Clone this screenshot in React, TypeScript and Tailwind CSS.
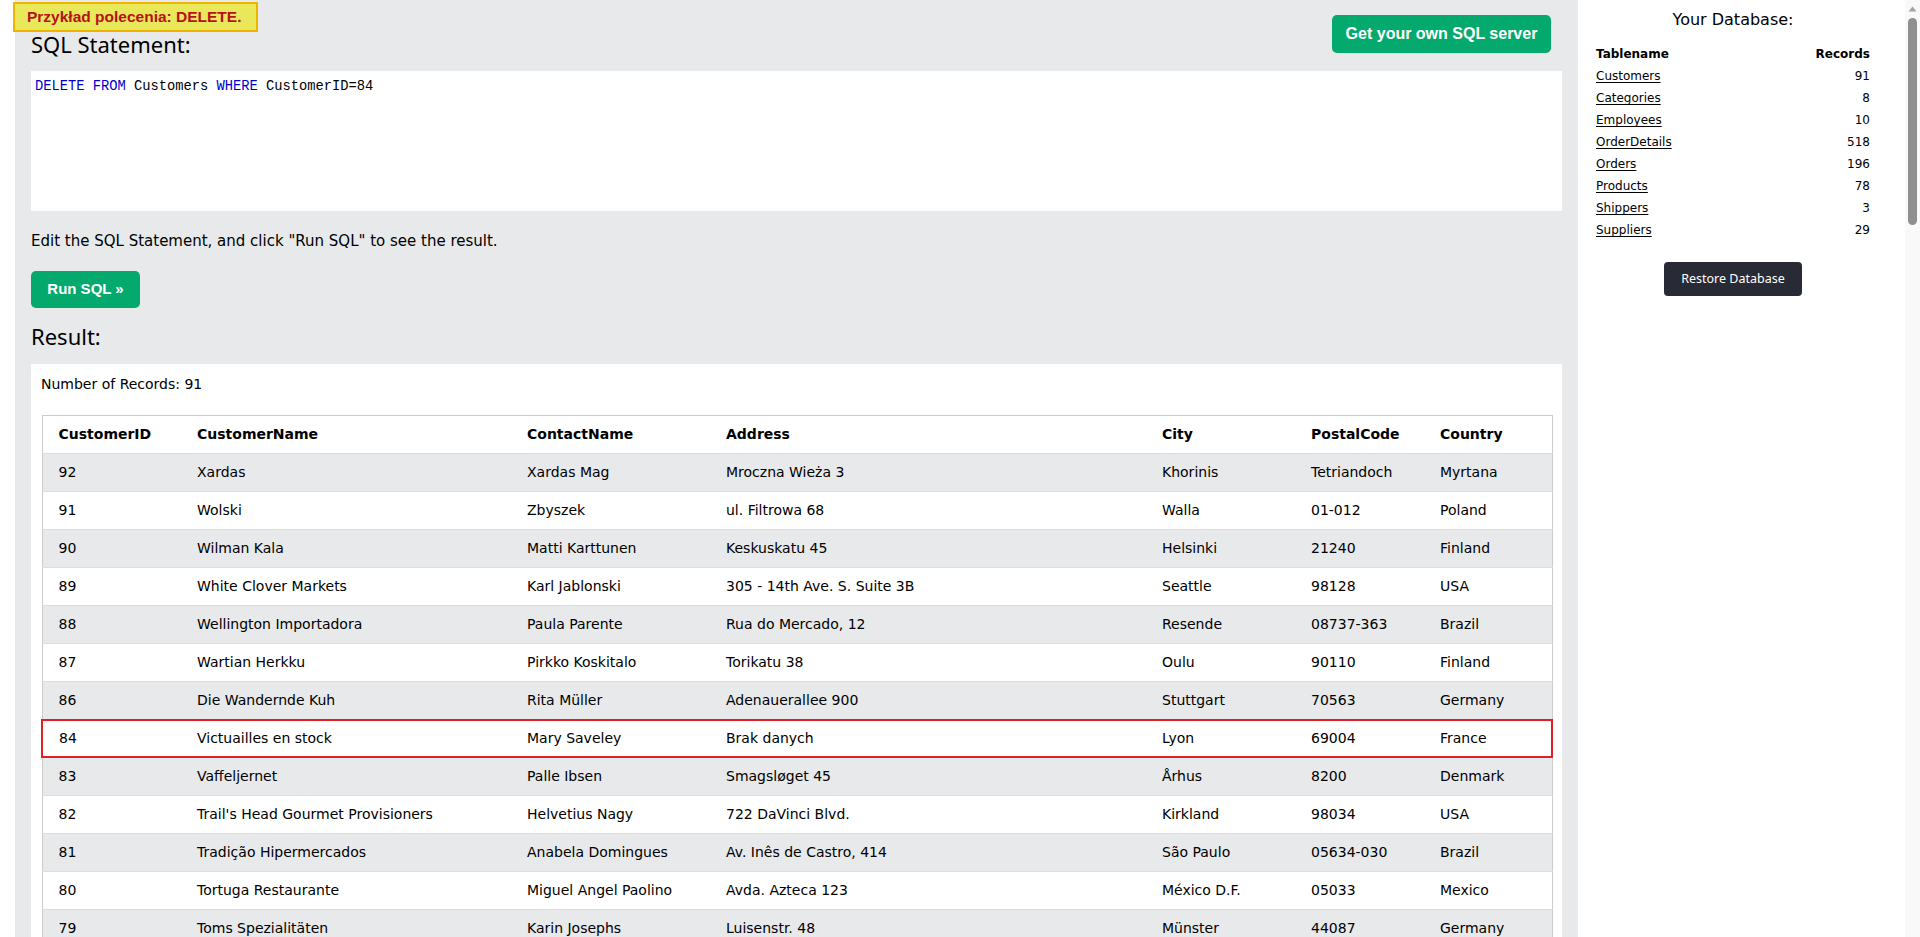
const rows: string[][] = [
  ["92", "Xardas", "Xardas Mag", "Mroczna Wieża 3", "Khorinis", "Tetriandoch", "Myrtana"],
  ["91", "Wolski", "Zbyszek", "ul. Filtrowa 68", "Walla", "01-012", "Poland"],
  ["90", "Wilman Kala", "Matti Karttunen", "Keskuskatu 45", "Helsinki", "21240", "Finland"],
  ["89", "White Clover Markets", "Karl Jablonski", "305 - 14th Ave. S. Suite 3B", "Seattle", "98128", "USA"],
  ["88", "Wellington Importadora", "Paula Parente", "Rua do Mercado, 12", "Resende", "08737-363", "Brazil"],
  ["87", "Wartian Herkku", "Pirkko Koskitalo", "Torikatu 38", "Oulu", "90110", "Finland"],
  ["86", "Die Wandernde Kuh", "Rita Müller", "Adenauerallee 900", "Stuttgart", "70563", "Germany"],
  ["84", "Victuailles en stock", "Mary Saveley", "Brak danych", "Lyon", "69004", "France"],
  ["83", "Vaffeljernet", "Palle Ibsen", "Smagsløget 45", "Århus", "8200", "Denmark"],
  ["82", "Trail's Head Gourmet Provisioners", "Helvetius Nagy", "722 DaVinci Blvd.", "Kirkland", "98034", "USA"],
  ["81", "Tradição Hipermercados", "Anabela Domingues", "Av. Inês de Castro, 414", "São Paulo", "05634-030", "Brazil"],
  ["80", "Tortuga Restaurante", "Miguel Angel Paolino", "Avda. Azteca 123", "México D.F.", "05033", "Mexico"],
  ["79", "Toms Spezialitäten", "Karin Josephs", "Luisenstr. 48", "Münster", "44087", "Germany"],
  ["78", "The Cracker Box", "Liu Wong", "55 Grizzly Peak Rd.", "Butte", "59801", "USA"],
  ["77", "The Big Cheese", "Liz Nixon", "89 Jefferson Way Suite 2", "Portland", "97201", "USA"],
];

const headers = ["CustomerID", "CustomerName", "ContactName", "Address", "City", "PostalCode", "Country"];
const colWidths = [147, 330, 199, 436, 149, 129, 120];

const tables: [string, string][] = [
  ["Customers", "91"],
  ["Categories", "8"],
  ["Employees", "10"],
  ["OrderDetails", "518"],
  ["Orders", "196"],
  ["Products", "78"],
  ["Shippers", "3"],
  ["Suppliers", "29"],
];

function ResultTable() {
  return (
    <table className="w-full table-fixed border-collapse border border-[#cccccc] text-[14px] leading-[21px] text-black">
      <colgroup>
        {colWidths.map((w, i) => (
          <col key={i} style={{ width: w }} />
        ))}
      </colgroup>
      <thead>
        <tr className="border-b border-[#dddddd] bg-white">
          {headers.map((h, i) => (
            <th key={h} className={`py-2 pr-2 text-left font-bold ${i === 0 ? "pl-4" : "pl-2"}`}>
              {h}
            </th>
          ))}
        </tr>
      </thead>
      <tbody>
        {rows.map((r, ri) => {
          const marked = r[0] === "84";
          return (
            <tr key={r[0]} className={`border-b border-[#dddddd] ${ri % 2 === 0 ? "bg-[#e7e9eb]" : "bg-white"}`}>
              {r.map((c, ci) => (
                <td
                  key={ci}
                  className={[
                    "pr-2 whitespace-nowrap overflow-hidden",
                    ci === 0 ? "pl-4" : "pl-2",
                    marked ? "py-[7px] border-y-2 border-[#e01f26]" : "py-2",
                    marked && ci === 0 ? "border-l-2" : "",
                    marked && ci === r.length - 1 ? "border-r-2" : "",
                  ].join(" ")}
                >
                  {c}
                </td>
              ))}
            </tr>
          );
        })}
      </tbody>
    </table>
  );
}

function Sidebar() {
  return (
    <div className="w-[327px] shrink-0 bg-white pt-[8px] font-['DejaVu_Sans',sans-serif]">
      <div className="ml-[18px] w-[274px]">
        <div className="text-center text-[16px] leading-[24px] text-black">Your Database:</div>
        <table className="mt-[11px] w-full border-collapse text-[12px] text-black">
          <thead>
            <tr className="h-[22px]">
              <th className="p-0 text-left font-bold">Tablename</th>
              <th className="p-0 text-right font-bold">Records</th>
            </tr>
          </thead>
          <tbody>
            {tables.map(([name, n]) => (
              <tr key={name} className="h-[22px]">
                <td className="p-0">
                  <span className="underline underline-offset-2">{name}</span>
                </td>
                <td className="p-0 text-right">{n}</td>
              </tr>
            ))}
          </tbody>
        </table>
        <div className="mt-[21px] flex justify-center">
          <button className="h-[34px] w-[138px] rounded-[4px] bg-[#282a35] font-['Noto_Sans',sans-serif] text-[12.5px] text-white">
            Restore Database
          </button>
        </div>
      </div>
    </div>
  );
}

function Scrollbar() {
  return (
    <div className="flex w-[15px] shrink-0 flex-col items-center bg-[#f9f9f9]">
      <svg width="9" height="6" viewBox="0 0 9 6" className="mt-[6px]">
        <path d="M4.5 0.5 L8.5 5.5 L0.5 5.5 Z" fill="#a3a3a3" />
      </svg>
      <div className="mt-[6px] h-[207px] w-[9px] rounded-full bg-[#8f8f8f]" />
    </div>
  );
}

export default function App() {
  return (
    <div className="flex h-[937px] w-[1920px] overflow-hidden bg-white">
      <div className="w-[15px] shrink-0 bg-white" />
      <div className="relative w-[1563px] shrink-0 bg-[#e7e9eb] px-4">
        <div className="absolute left-[-2px] top-[2px] flex h-[30px] w-[245px] items-center border-2 border-[#f0b400] bg-[#e8e85a] pl-[12px] font-['Liberation_Sans',sans-serif] text-[15.5px] font-bold text-[#b8101a]">
          Przykład polecenia: DELETE.
        </div>

        <div className="flex items-start justify-between pt-[15px]">
          <h2 className="mt-[14px] font-['Noto_Sans',sans-serif] text-[22px] leading-[30px] font-normal text-black">
            SQL Statement:
          </h2>
          <button className="mr-[11px] h-[38px] w-[219px] rounded-[5px] bg-[#04aa6d] font-['Liberation_Sans',sans-serif] text-[16px] font-bold text-white">
            Get your own SQL server
          </button>
        </div>

        <div className="mt-[12px] h-[140px] bg-white px-[4px] pt-[6px] font-['Liberation_Mono',monospace] text-[13.75px] leading-[20px] text-black">
          <span className="text-[#0000cd]">DELETE</span> <span className="text-[#0000cd]">FROM</span> Customers{" "}
          <span className="text-[#0000cd]">WHERE</span> CustomerID=84
        </div>

        <p className="mt-[19px] font-['DejaVu_Sans',sans-serif] text-[15px] leading-[22.5px] text-black">
          Edit the SQL Statement, and click "Run SQL" to see the result.
        </p>

        <button className="mt-[18px] h-[37px] w-[109px] rounded-[5px] bg-[#04aa6d] font-['Liberation_Sans',sans-serif] text-[15px] font-bold text-white">
          Run SQL »
        </button>

        <h2 className="mt-[13px] font-['Noto_Sans',sans-serif] text-[22px] leading-[30px] font-normal text-black">
          Result:
        </h2>

        <div className="mt-[13px] bg-white px-[10px] pt-[10px] pb-[20px] font-['DejaVu_Sans',sans-serif]">
          <div className="text-[14px] leading-[21px] text-black">Number of Records: 91</div>
          <div className="mt-[20px]">
            <ResultTable />
          </div>
        </div>
      </div>
      <Sidebar />
      <Scrollbar />
    </div>
  );
}
